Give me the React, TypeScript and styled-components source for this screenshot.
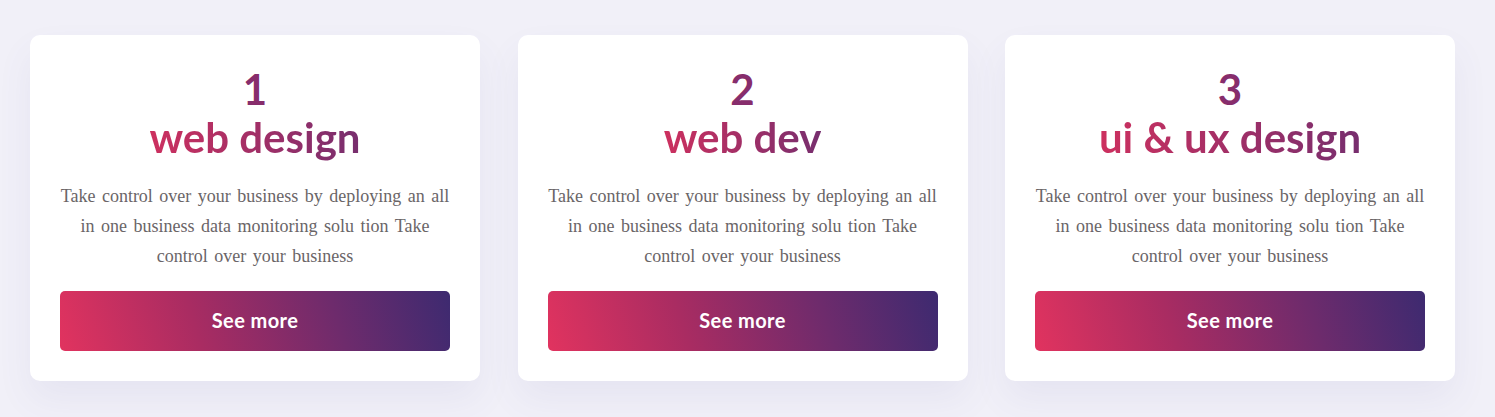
import React from "react";
import styled, { createGlobalStyle } from "styled-components";

const GlobalStyle = createGlobalStyle`
  html, body {
    margin: 0;
    padding: 0;
    background: #f1f0f8;
  }
  * { box-sizing: border-box; }
`;

const Page = styled.div`
  width: 1495px;
  height: 417px;
  background: #f1f0f8;
  padding: 35px 0 0 30px;
  overflow: hidden;
`;

const Grid = styled.div`
  display: grid;
  grid-template-columns: repeat(3, 450px);
  column-gap: 37.5px;
`;

const Card = styled.div`
  background: #ffffff;
  border-radius: 10px;
  padding: 30px 30px 30px;
  display: flex;
  flex-direction: column;
  align-items: center;
  box-shadow: 0 18px 36px rgba(90, 80, 160, 0.07);
`;

const Heading = styled.h2`
  margin: 0;
  display: flex;
  flex-direction: column;
  align-items: center;
  font-family: "Lato", "Noto Sans", sans-serif;
  font-weight: 700;
  font-size: 42px;
  line-height: 48px;
`;

const Num = styled.span`
  color: #872d6c;
`;

const Title = styled.span`
  display: inline-block;
  background: linear-gradient(90deg, #cd305f 0%, #772e6e 100%);
  -webkit-background-clip: text;
  background-clip: text;
  color: transparent;
`;

const Text = styled.p`
  margin: 20px 0 0;
  font-family: "Liberation Serif", "Times New Roman", serif;
  font-size: 18px;
  word-spacing: 2px;
  line-height: 30px;
  color: #6a6567;
  text-align: center;
`;

const Button = styled.button`
  margin-top: 20px;
  width: 100%;
  height: 60px;
  padding: 0 0 3px;
  border: none;
  border-radius: 5px;
  background: linear-gradient(72deg, #e1335f 0%, #a92c62 35%, #6e2b6c 70%, #3d2a70 100%);
  color: #ffffff;
  font-family: "Lato", "Noto Sans", sans-serif;
  font-weight: 700;
  font-size: 20px;
  letter-spacing: 0.4px;
  cursor: pointer;
`;

const items = [
  { n: "1", title: "web design" },
  { n: "2", title: "web dev" },
  { n: "3", title: "ui & ux design" },
];

const body =
  "Take control over your business by deploying an all in one business data monitoring solu tion Take control over your business";

export default function App() {
  return (
    <>
      <GlobalStyle />
      <Page>
        <Grid>
          {items.map((it) => (
            <Card key={it.n}>
              <Heading>
                <Num>{it.n}</Num>
                <Title>{it.title}</Title>
              </Heading>
              <Text>{body}</Text>
              <Button>See more</Button>
            </Card>
          ))}
        </Grid>
      </Page>
    </>
  );
}
